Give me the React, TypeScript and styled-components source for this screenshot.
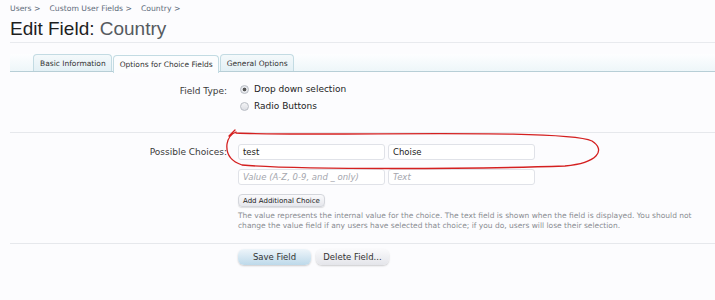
import React from "react";
import styled, { createGlobalStyle } from "styled-components";

const GlobalStyle = createGlobalStyle`
	body {
		margin: 0;
		background: #fcfcfe;
		font-family: "DejaVu Sans", Verdana, sans-serif;
	}
`;

const Page = styled.div`
	position: relative;
	width: 715px;
	height: 300px;
	padding: 4px 0 0 10px;
	box-sizing: border-box;
	overflow: hidden;
`;

const Breadcrumb = styled.div`
	display: flex;
	gap: 9px;
	font-size: 7.7px;
	line-height: 10px;
	color: #5c6b7a;
`;

const Title = styled.h1`
	margin: 4px 0 0;
	font-family: "Liberation Sans", Arial, sans-serif;
	font-weight: normal;
	font-size: 19px;
	line-height: 21px;
	color: #1e1e1e;
	padding-bottom: 3px;
	border-bottom: 1px solid #e8eaee;

	span {
		color: #555a60;
	}
`;

const TabStrip = styled.div`
	display: flex;
	margin-top: 11px;
	padding-left: 23px;
	height: 17px;
	background: linear-gradient(to bottom, #fdfeff, #eef6f9);
	border-bottom: 1px solid #b7ced6;
`;

const Tab = styled.div<{ $active?: boolean }>`
	display: flex;
	align-items: center;
	margin-right: 1px;
	padding: 0 5px 0 6px;
	height: ${(p) => (p.$active ? "18px" : "17px")};
	font-size: 7.5px;
	color: #333;
	border: 1px solid #c3dbe3;
	border-bottom: none;
	border-radius: 4px 4px 0 0;
	box-sizing: border-box;
	background: ${(p) =>
		p.$active ? "#fcfdfe" : "linear-gradient(to bottom, #f4f9fb, #e3f0f5)"};
	position: relative;
	top: ${(p) => (p.$active ? "1px" : "0")};
`;

const Section = styled.div<{ $rule?: boolean }>`
	display: grid;
	grid-template-columns: 217px 1fr;
	column-gap: 11px;
	padding: ${(p) => (p.$rule ? "11px 0 12px" : "11px 0 19px")};
	border-bottom: 1px solid #e6e8ec;
`;

const Label = styled.div`
	text-align: right;
	font-size: 9px;
	line-height: 12px;
	color: #3a3a3a;
	padding-top: 2px;
`;

const Controls = styled.div`
	display: flex;
	flex-direction: column;
	gap: 4px;
`;

const RadioRow = styled.label`
	display: flex;
	align-items: center;
	gap: 5px;
	padding-left: 2px;
	font-size: 9px;
	line-height: 13px;
	color: #222;
`;

const RadioDot = styled.span<{ $checked?: boolean }>`
	width: 9px;
	height: 9px;
	border-radius: 50%;
	border: 1px solid #b8bcc4;
	box-sizing: border-box;
	background: ${(p) =>
		p.$checked
			? "radial-gradient(circle, #555 0 1.5px, #e6e8ec 2.2px)"
			: "linear-gradient(to bottom, #f4f4f6, #dcdee4)"};
`;

const InputStack = styled.div`
	display: flex;
	flex-direction: column;
	gap: 9px;
`;

const InputRow = styled.div`
	display: flex;
	gap: 3px;
`;

const TextBox = styled.div<{ $placeholder?: boolean }>`
	width: 147px;
	height: 16px;
	padding: 0 4px;
	box-sizing: border-box;
	display: flex;
	align-items: center;
	background: #fff;
	border: 1px solid #e0e2e8;
	border-radius: 3px;
	font-size: 8.5px;
	color: ${(p) => (p.$placeholder ? "#a4a6ad" : "#222")};
	font-style: ${(p) => (p.$placeholder ? "italic" : "normal")};
`;

const SmallButton = styled.button`
	align-self: flex-start;
	margin-top: 5px;
	height: 13px;
	padding: 0 4px;
	font-family: inherit;
	font-size: 7px;
	color: #222;
	background: linear-gradient(to bottom, #fafafc, #e6e7ec);
	border: 1px solid #d4d6dc;
	border-radius: 4px;
	box-shadow: 0 1px 1px rgba(0, 0, 0, 0.12);
`;

const Explain = styled.p`
	margin: 0;
	width: 455px;
	font-size: 7.5px;
	line-height: 10px;
	color: #8a8c92;
`;

const ButtonRow = styled.div`
	display: flex;
	gap: 5px;
	padding: 5px 0 0 228px;
`;

const FormButton = styled.button<{ $primary?: boolean }>`
	width: 73px;
	height: 16px;
	font-family: inherit;
	font-size: 8.5px;
	color: #333;
	border: none;
	border-radius: 6px;
	box-shadow: 0 1px 2px rgba(0, 0, 0, 0.2);
	background: ${(p) =>
		p.$primary
			? "linear-gradient(to bottom, #eef5fa, #bdd9ea)"
			: "linear-gradient(to bottom, #fafafc, #e4e5ea)"};
`;

const Annotation = styled.svg`
	position: absolute;
	left: 0;
	top: 0;
	pointer-events: none;
`;

export default function App() {
	return (
		<>
			<GlobalStyle />
			<Page>
				<Breadcrumb>
					<span>Users &gt;</span>
					<span>Custom User Fields &gt;</span>
					<span>Country &gt;</span>
				</Breadcrumb>
				<Title>
					Edit Field: <span>Country</span>
				</Title>
				<TabStrip>
					<Tab>Basic Information</Tab>
					<Tab $active>Options for Choice Fields</Tab>
					<Tab>General Options</Tab>
				</TabStrip>

				<Section>
					<Label>Field Type:</Label>
					<Controls>
						<RadioRow>
							<RadioDot $checked />
							Drop down selection
						</RadioRow>
						<RadioRow>
							<RadioDot />
							Radio Buttons
						</RadioRow>
					</Controls>
				</Section>

				<Section $rule>
					<Label>Possible Choices:</Label>
					<Controls>
						<InputStack>
							<InputRow>
								<TextBox>test</TextBox>
								<TextBox>Choise</TextBox>
							</InputRow>
							<InputRow>
								<TextBox $placeholder>Value (A-Z, 0-9, and _ only)</TextBox>
								<TextBox $placeholder>Text</TextBox>
							</InputRow>
						</InputStack>
						<SmallButton>Add Additional Choice</SmallButton>
						<Explain>
							The value represents the internal value for the choice. The text
							field is shown when the field is displayed. You should not change
							the value field if any users have selected that choice; if you do,
							users will lose their selection.
						</Explain>
					</Controls>
				</Section>

				<ButtonRow>
					<FormButton $primary>Save Field</FormButton>
					<FormButton>Delete Field...</FormButton>
				</ButtonRow>

				<Annotation width="715" height="300" viewBox="0 0 715 300">
					<path
						d="M229 136 L235 130 M236 132 C231 134 228 138 227 144 C226 153 230 161 242 165 C300 170 480 169 565 166 C598 163 606 150 592 141 C570 131 420 134 320 134 C280 134 255 134 236 133"
						fill="none"
						stroke="#d42020"
						strokeWidth="1.3"
						strokeLinecap="round"
					/>
				</Annotation>
			</Page>
		</>
	);
}
